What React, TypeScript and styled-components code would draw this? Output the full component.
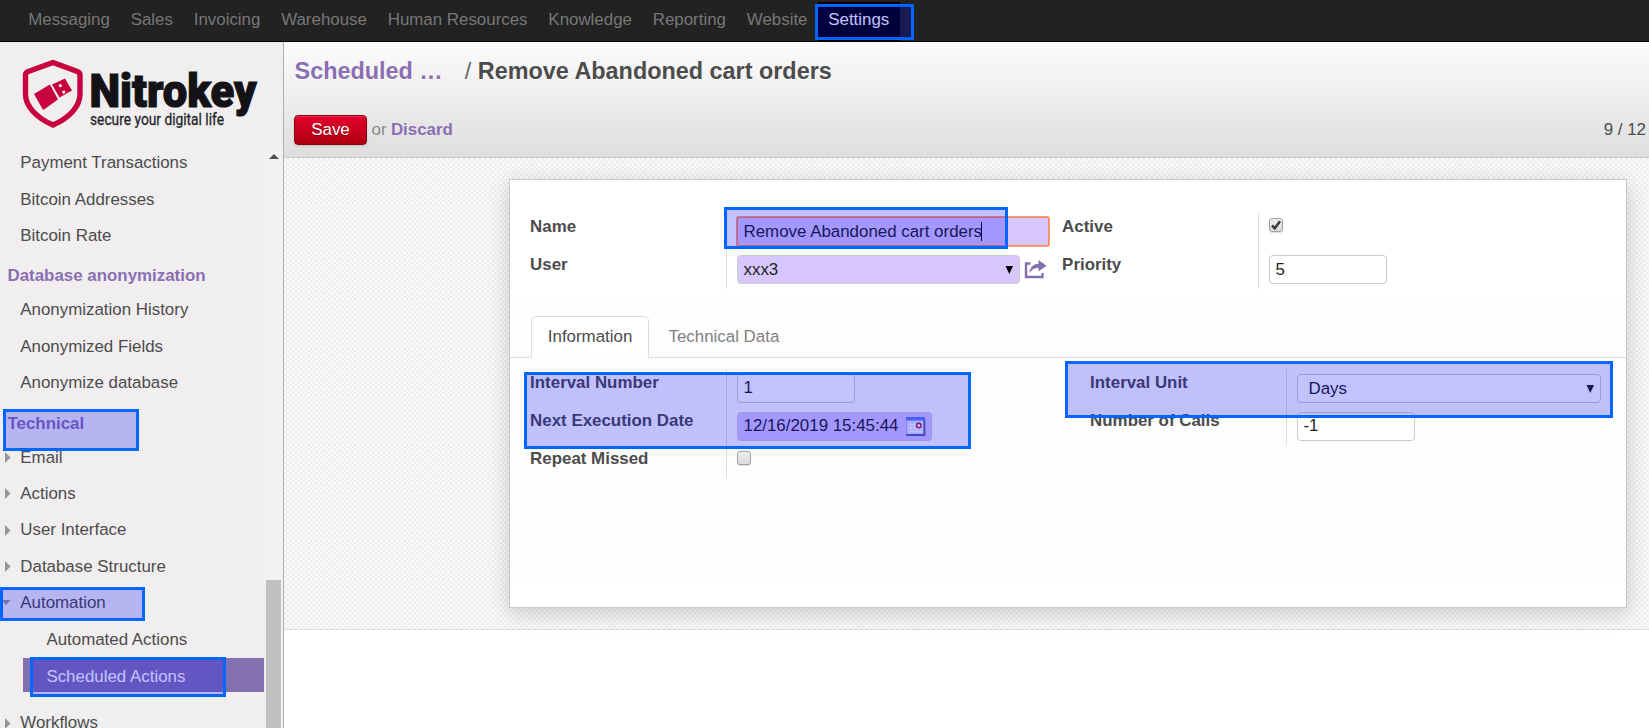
import React from "react";
import styled, { createGlobalStyle, css } from "styled-components";

const Global = createGlobalStyle`
  *, *::before, *::after { box-sizing: border-box; }
  html, body { margin: 0; padding: 0; }
  body {
    font-family: "Liberation Sans", Arial, sans-serif;
    font-size: 16.9px;
    color: #4c4c4c;
    background: #fff;
    overflow: hidden;
  }
`;

const Page = styled.div`
  position: relative;
  display: flex;
  flex-direction: column;
  width: 1649px;
  height: 728px;
  overflow: hidden;
`;

/* ---------- top bar ---------- */

const TopBar = styled.nav`
  flex: none;
  display: flex;
  height: 42px;
  padding: 2px 0 0 17.8px;
  background: #222;
  border-bottom: 1px solid #000;
`;

const TopItem = styled.a<{ $active?: boolean }>`
  padding: 0 10.4px;
  line-height: 35px;
  color: ${(p) => (p.$active ? "#fff" : "#777")};
  background: ${(p) => (p.$active ? "#000" : "transparent")};
`;

const Body = styled.div`
  flex: 1;
  display: flex;
  min-height: 0;
`;

/* ---------- sidebar ---------- */

const Sidebar = styled.aside`
  flex: none;
  display: flex;
  flex-direction: column;
  width: 284px;
  background: #f0eeee;
  border-right: 1px solid #afafb6;
  overflow: hidden;
`;

const LogoBox = styled.div`
  flex: none;
  height: 104px;
  padding: 16px 0 0 22px;

  svg { overflow: visible; }
`;

const MenuArea = styled.div`
  flex: 1;
  display: flex;
  min-height: 0;
`;

const Menu = styled.div`
  flex: 1;
  margin-top: -1px;
`;

const Heading = styled.h4<{ $drop?: number }>`
  margin: 0;
  height: 38px;
  padding: ${(p) => 4 + (p.$drop ?? 0)}px 0 0 7.5px;
  font-size: 16.9px;
  line-height: 36px;
  color: #8a6fb3;
`;

const MenuItem = styled.a<{ $sub?: boolean; $active?: boolean }>`
  display: flex;
  align-items: center;
  height: 36.4px;
  padding-left: ${(p) => (p.$sub ? "46.4px" : "0")};
  white-space: nowrap;
  ${(p) =>
    p.$sub &&
    css`
      padding-top: 1.5px;
    `}
  ${(p) =>
    p.$active &&
    css`
      height: 34px;
      margin: 0.2px 0 13px 23px;
      padding-top: 4.5px;
      padding-left: 23.4px;
      background: #8370af;
      color: #fff;
    `}
`;

const Toggle = styled.span`
  display: flex;
  align-items: center;
  width: 20.3px;
  padding-left: 5px;
  color: #959595;

  svg { flex: none; }
`;

const Scrollbar = styled.div`
  flex: none;
  display: flex;
  flex-direction: column;
  align-items: center;
  width: 19px;
  padding-top: 8px;
  background: #f1f1f1;
`;

const ArrowUp = styled.i`
  border: 5px solid transparent;
  border-top: 0;
  border-bottom-color: #505050;
`;

const Thumb = styled.div`
  width: 15px;
  flex: 1;
  margin-top: 421px;
  background: #c1c1c1;
`;

/* ---------- main ---------- */

const Main = styled.main`
  flex: 1;
  min-width: 0;
  display: flex;
  flex-direction: column;
`;

const Header = styled.header`
  flex: none;
  height: 116px;
  padding: 13px 3px 0 10px;
  background: linear-gradient(#fcfcfc, #dedede);
  border-bottom: 1px solid #cacaca;
`;

const Title = styled.h2`
  display: flex;
  margin: 0;
  padding-left: 0.6px;
  font-size: 23.4px;
  line-height: 32px;
  text-shadow: 0 1px 1px #fff;
  white-space: pre;
`;

const Crumb = styled.a`
  width: 170.2px;
  color: #8a6fb3;
`;

const Slash = styled.span`
  width: 13px;
  font-weight: 400;
  color: #666;
`;

const Actions = styled.div`
  display: flex;
  align-items: center;
  margin-top: 28px;
  height: 30px;
  color: #8a8a8a;
`;

const Save = styled.button`
  width: 73px;
  height: 30px;
  margin-right: 4.5px;
  padding: 0;
  font: inherit;
  color: #fff;
  text-shadow: 0 1px 1px rgba(0, 0, 0, 0.3);
  background: linear-gradient(#e4002e, #ae0010);
  border: 1px solid #8d0015;
  border-radius: 4px;
  box-shadow: 0 1px 2px rgba(0, 0, 0, 0.15), inset 0 1px 0 rgba(240, 80, 110, 0.6);
`;

const Discard = styled.a`
  margin-left: 4.4px;
  font-weight: 700;
  color: #8a6fb3;
`;

const Pager = styled.span`
  margin-left: auto;
  color: #4c4c4c;
`;

const SheetBg = styled.div`
  flex: none;
  height: 472px;
  padding: 21px 22px 0 225px;
  border-bottom: 1px solid #ddd;
  background: repeating-conic-gradient(#ededed 0 25%, #fbfbfb 0 50%) 0 0 / 5.2px 5.2px;
`;

const Sheet = styled.section`
  height: 429px;
  border: 1px solid #c8c8d3;
  background: linear-gradient(#fff, #fff 25%, #fdfdfd 50%, #fff);
  box-shadow: 0 5px 20px rgba(0, 0, 0, 0.18);
`;

const Groups = styled.div<{ $top: number; $left: number }>`
  display: grid;
  grid-template-columns: ${(p) => p.$left}px auto;
  align-items: start;
  padding: ${(p) => p.$top}px 25px 0 20.5px;
`;

const Group = styled.div`
  display: grid;
  grid-template-columns: 196px 1fr;
`;

const Labels = styled.div<{ $height?: number }>`
  height: ${(p) => p.$height ?? 76}px;
  border-right: 1px solid #ddd;
`;

const Label = styled.label`
  display: block;
  height: 37.8px;
  margin-left: -0.4px;
  line-height: 28px;
  font-weight: 700;
`;

const Fields = styled.div<{ $nudge?: number }>`
  margin-bottom: -4px;
  padding: ${(p) => p.$nudge ?? 4}px 0 0 10px;
`;

const FieldRow = styled.div`
  display: flex;
  height: 38px;
`;

const Field = styled.div<{ $w: number; $required?: boolean; $focus?: boolean; $pad?: number }>`
  display: flex;
  align-items: center;
  width: ${(p) => p.$w}px;
  height: 29px;
  padding: 0 5px 0 ${(p) => p.$pad ?? 6}px;
  border: 1px solid #ccc;
  border-radius: 4px;
  background: ${(p) => (p.$required ? "#d8c7ff" : "#fff")};
  color: #1f1f1f;
  white-space: nowrap;
  ${(p) =>
    p.$focus &&
    css`
      border-color: #f58a65;
      border-radius: 2px;
      box-shadow: 0 0 0 1px #ff9a73;
    `}
`;

const FieldText = styled.span`
  padding-bottom: 2px;
`;

const Caret = styled.i`
  width: 1px;
  height: 19px;
  margin-left: -1px;
  background: #000;
`;

const End = styled.span`
  display: flex;
  margin-left: auto;
`;

const Link = styled.span`
  margin: 5px 0 0 4.5px;
`;

const Check = styled.span`
  display: flex;
  align-items: center;
  justify-content: center;
  width: 14px;
  height: 14px;
  margin-top: 1px;
  border: 1px solid #a3a3a3;
  border-radius: 3px;
  background: linear-gradient(#eee, #dcdcdc);
  box-shadow: 0 1px 1px rgba(0, 0, 0, 0.15);
`;

const Tabs = styled.div`
  display: flex;
  height: 42px;
  margin-top: 27px;
  padding-left: 21px;
  border-bottom: 1px solid #ddd;
`;

const Tab = styled.a<{ $active?: boolean }>`
  height: 42px;
  padding: 0 15.8px;
  margin-right: 2.6px;
  line-height: 39px;
  border: 1px solid transparent;
  color: #808080;
  ${(p) =>
    p.$active &&
    css`
      color: #4c4c4c;
      background: #fff;
      border-color: #ddd #ddd #fff;
      border-radius: 5px 5px 0 0;
    `}
`;

/* Tinted frames that lie over the interface and point at parts of it. */
const Highlight = styled.div<{ $box: [number, number, number, number] }>`
  position: absolute;
  left: ${(p) => p.$box[0]}px;
  top: ${(p) => p.$box[1]}px;
  width: ${(p) => p.$box[2]}px;
  height: ${(p) => p.$box[3]}px;
  border: 3px solid #0066ff;
  background: rgba(0, 0, 255, 0.24);
  background-clip: padding-box;
  pointer-events: none;
`;

const highlights: [number, number, number, number][] = [
  [815, 4, 99, 36],
  [3, 409, 136, 42],
  [0, 587, 145, 34],
  [30, 657, 196, 40],
  [724, 207, 284, 42],
  [524, 372, 447, 77],
  [1065, 361, 548, 57],
];

const topItems = [
  "Messaging", "Sales", "Invoicing", "Warehouse", "Human Resources",
  "Knowledge", "Reporting", "Website", "Settings",
];

const Logo = () => (
  <svg width="240" height="80" viewBox="22 58 240 80">
    <path
      d="M53 62.500 L78 71.800 Q80 72.800 80 75 V94 C80 106 70 117.500 53 125 C36 117.500 25.500 106 25.500 94 V75 Q25.500 72.800 27.500 71.800 Z"
      fill="none" stroke="#c8023e" strokeWidth="5.400" strokeLinejoin="round"
    />
    <g fill="#c8023e">
      <path d="M34 94 L49 85 Q50 84.500 50.500 85.500 L58 99.500 L44 109.500 Q43 110 42.500 109 Z" />
      <path fillRule="evenodd" d="M52 84.500 L65 78.500 L72 90.500 L59.500 97.500 Z M58.500 85 l2.500 -1.300 l1.300 2.500 l-2.500 1.300 Z M61.800 91.500 l2.500 -1.300 l1.300 2.500 l-2.500 1.300 Z" />
    </g>
    <text x="89.500" y="106.500" fontFamily="Roboto" fontWeight="900" fontSize="46" fill="#131217"
      stroke="#131217" strokeWidth="1.200" textLength="167" lengthAdjust="spacingAndGlyphs">Nitrokey</text>
    <text x="90" y="125" fontFamily="Roboto" fontSize="17" fill="#26252a" stroke="#26252a" strokeWidth="0.300"
      textLength="134" lengthAdjust="spacingAndGlyphs">secure your digital life</text>
  </svg>
);

const Triangle = ({ open }: { open?: boolean }) =>
  open ? (
    <svg width="6" height="6" viewBox="0 0 6 6"><path d="M-3 0H5.500L1 5Z" fill="currentColor" overflow="visible" /></svg>
  ) : (
    <svg width="6" height="11" viewBox="0 0 6 11"><path d="M0 0V11L5.500 5.500Z" fill="currentColor" /></svg>
  );

const OpenToggle = styled(Toggle)`
  svg { overflow: visible; }
`;

const DropArrow = ({ color }: { color: string }) => (
  <svg width="9" height="9" viewBox="0 0 9 9"><path d="M.500 1H8L4.250 9Z" fill={color} /></svg>
);

const ShareIcon = () => (
  <svg width="23" height="19" viewBox="0 0 23 19">
    <path d="M6.500 3.500H2V17H18.500V13" fill="none" stroke="#8370af" strokeWidth="2.400" />
    <path d="M14.500 0L22.500 5.700L14.500 11.500V8C10.500 7.800 8 9.500 5.500 13C6 7.500 9 4 14.500 3.700Z" fill="#8370af" />
  </svg>
);

const CalendarIcon = () => (
  <svg width="20" height="19" viewBox="0 0 20 19">
    <rect x=".5" y=".5" width="18.500" height="18" fill="#dfe3f6" stroke="#a9b3e0" />
    <rect x="0" y="0" width="19" height="3.500" fill="#5f7ff0" />
    <path d="M3 7.500H16M3 11H16M3 14.500H16M4.500 6V16M8 6V16M11.500 6V16M15 6V16" stroke="#fff" strokeWidth="1" />
    <circle cx="12.800" cy="8.500" r="2.200" fill="#fff" stroke="#b3124e" strokeWidth="1.400" />
    <path d="M18.300 3V18H0" fill="none" stroke="#5264a8" strokeWidth="1.800" />
  </svg>
);

const Item = ({ label, open }: { label: string; open?: boolean }) => (
  <MenuItem>
    {open ? <OpenToggle><Triangle open /></OpenToggle> : <Toggle><Triangle /></Toggle>}
    {label}
  </MenuItem>
);

const Leaf = ({ label }: { label: string }) => (
  <MenuItem><Toggle />{label}</MenuItem>
);

export default function App() {
  return (
    <Page>
      <Global />
      <TopBar>
        {topItems.map((t) => <TopItem key={t} $active={t === "Settings"}>{t}</TopItem>)}
      </TopBar>
      <Body>
        <Sidebar>
          <LogoBox><Logo /></LogoBox>
          <MenuArea>
            <Menu>
              <Leaf label="Payment Transactions" />
              <Leaf label="Bitcoin Addresses" />
              <Leaf label="Bitcoin Rate" />
              <Heading>Database anonymization</Heading>
              <Leaf label="Anonymization History" />
              <Leaf label="Anonymized Fields" />
              <Leaf label="Anonymize database" />
              <Heading $drop={1}>Technical</Heading>
              <Item label="Email" />
              <Item label="Actions" />
              <Item label="User Interface" />
              <Item label="Database Structure" />
              <Item label="Automation" open />
              <MenuItem $sub>Automated Actions</MenuItem>
              <MenuItem $sub $active>Scheduled Actions</MenuItem>
              <Item label="Workflows" />
            </Menu>
            <Scrollbar><ArrowUp /><Thumb /></Scrollbar>
          </MenuArea>
        </Sidebar>
        <Main>
          <Header>
            <Title><Crumb>Scheduled …</Crumb><Slash>/</Slash>Remove Abandoned cart orders</Title>
            <Actions>
              <Save>Save</Save>or<Discard>Discard</Discard>
              <Pager>9 / 12</Pager>
            </Actions>
          </Header>
          <SheetBg>
            <Sheet>
              <Groups $top={33} $left={532}>
                <Group>
                  <Labels><Label>Name</Label><Label>User</Label></Labels>
                  <Fields>
                    <FieldRow>
                      <Field $w={312} $required $focus>Remove Abandoned cart orders<Caret /></Field>
                    </FieldRow>
                    <FieldRow>
                      <Field $w={283} $required>xxx3<End><DropArrow color="#000" /></End></Field>
                      <Link><ShareIcon /></Link>
                    </FieldRow>
                  </Fields>
                </Group>
                <Group>
                  <Labels><Label>Active</Label><Label>Priority</Label></Labels>
                  <Fields>
                    <FieldRow>
                      <Check>
                        <svg width="12" height="12" viewBox="0 0 12 12"><path d="M2 6.500L4.800 9.300L10 2.200" fill="none" stroke="#3c3c3c" strokeWidth="2.600" /></svg>
                      </Check>
                    </FieldRow>
                    <FieldRow><Field $w={118}>5</Field></FieldRow>
                  </Fields>
                </Group>
              </Groups>
              <Tabs>
                <Tab $active>Information</Tab>
                <Tab>Technical Data</Tab>
              </Tabs>
              <Groups $top={11} $left={560}>
                <Group>
                  <Labels $height={109}><Label>Interval Number</Label><Label>Next Execution Date</Label><Label>Repeat Missed</Label></Labels>
                  <Fields $nudge={5}>
                    <FieldRow><Field $w={118}><FieldText>1</FieldText></Field></FieldRow>
                    <FieldRow><Field $w={195} $required><FieldText>12/16/2019 15:45:44</FieldText><End><CalendarIcon /></End></Field></FieldRow>
                    <Check />
                  </Fields>
                </Group>
                <Group>
                  <Labels><Label>Interval Unit</Label><Label>Number of Calls</Label></Labels>
                  <Fields $nudge={5}>
                    <FieldRow><Field $w={304} $pad={11}>Days<End><DropArrow color="#1f1f1f" /></End></Field></FieldRow>
                    <FieldRow><Field $w={118}><FieldText>-1</FieldText></Field></FieldRow>
                  </Fields>
                </Group>
              </Groups>
            </Sheet>
          </SheetBg>
        </Main>
      </Body>
      {highlights.map((b, i) => <Highlight key={i} $box={b} />)}
    </Page>
  );
}
